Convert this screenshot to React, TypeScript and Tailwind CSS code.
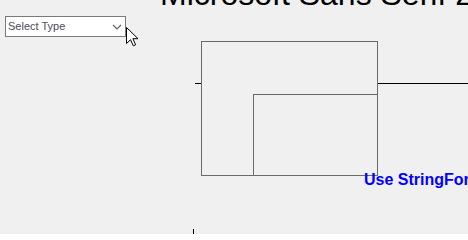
// Chart area is a free canvas: the frame and guide lines sit at fixed pixel spots
const Diagram = () => (
  <svg
    className="absolute left-0 top-0"
    width={468}
    height={234}
    viewBox="0 0 468 234"
    shapeRendering="crispEdges"
  >
    <line x1={195} y1={83.5} x2={201} y2={83.5} stroke="#000" />
    <line x1={378} y1={83.5} x2={468} y2={83.5} stroke="#000" />
    <rect x={201.5} y={41.5} width={176} height={134} fill="none" stroke="#6a6a6a" />
    <polyline points="253.5,175 253.5,94.5 377,94.5" fill="none" stroke="#6a6a6a" />
    <line x1={193.5} y1={229} x2={193.5} y2={234} stroke="#000" />
  </svg>
);

const Cursor = () => (
  <svg className="absolute left-[126px] top-[27px]" width={13} height={20} viewBox="0 0 13 20">
    <path
      d="M0.5 0.5 L0.5 16.5 L4.5 12.7 L7.3 18.8 L9.6 17.8 L6.9 11.7 L12 11.7 Z"
      fill="#fff"
      stroke="#000"
      strokeLinejoin="miter"
    />
  </svg>
);

const Chevron = () => (
  <svg width={10} height={6} viewBox="0 0 10 6">
    <polyline points="1,1 5,5 9,1" fill="none" stroke="#5f5f5f" strokeWidth={1.1} />
  </svg>
);

const TypeSelect = () => (
  <div className="flex h-[21px] w-[121px] items-center justify-between border border-[#7a7a7a] bg-white pl-[2px] pr-[3px]">
    <span className="text-[11px] leading-[19px] text-[#4e4a5e]">Select Type</span>
    <Chevron />
  </div>
);

export default function App() {
  return (
    <div className="relative h-[234px] w-[468px] overflow-hidden bg-[#f0f0f0] font-['Liberation_Sans',Arial,sans-serif]">
      <Diagram />
      <p className="absolute left-[160px] top-[-22px] whitespace-nowrap text-[32px] leading-[32px] text-black">
        Microsoft Sans Serif 2D Chart
      </p>
      <div className="relative ml-[5px] pt-[16px]">
        <TypeSelect />
      </div>
      <Cursor />
      <p className="absolute left-[364px] top-[172px] whitespace-nowrap text-[16px] font-bold leading-[16px] text-[#0000ff]">
        Use StringFormat
      </p>
    </div>
  );
}
